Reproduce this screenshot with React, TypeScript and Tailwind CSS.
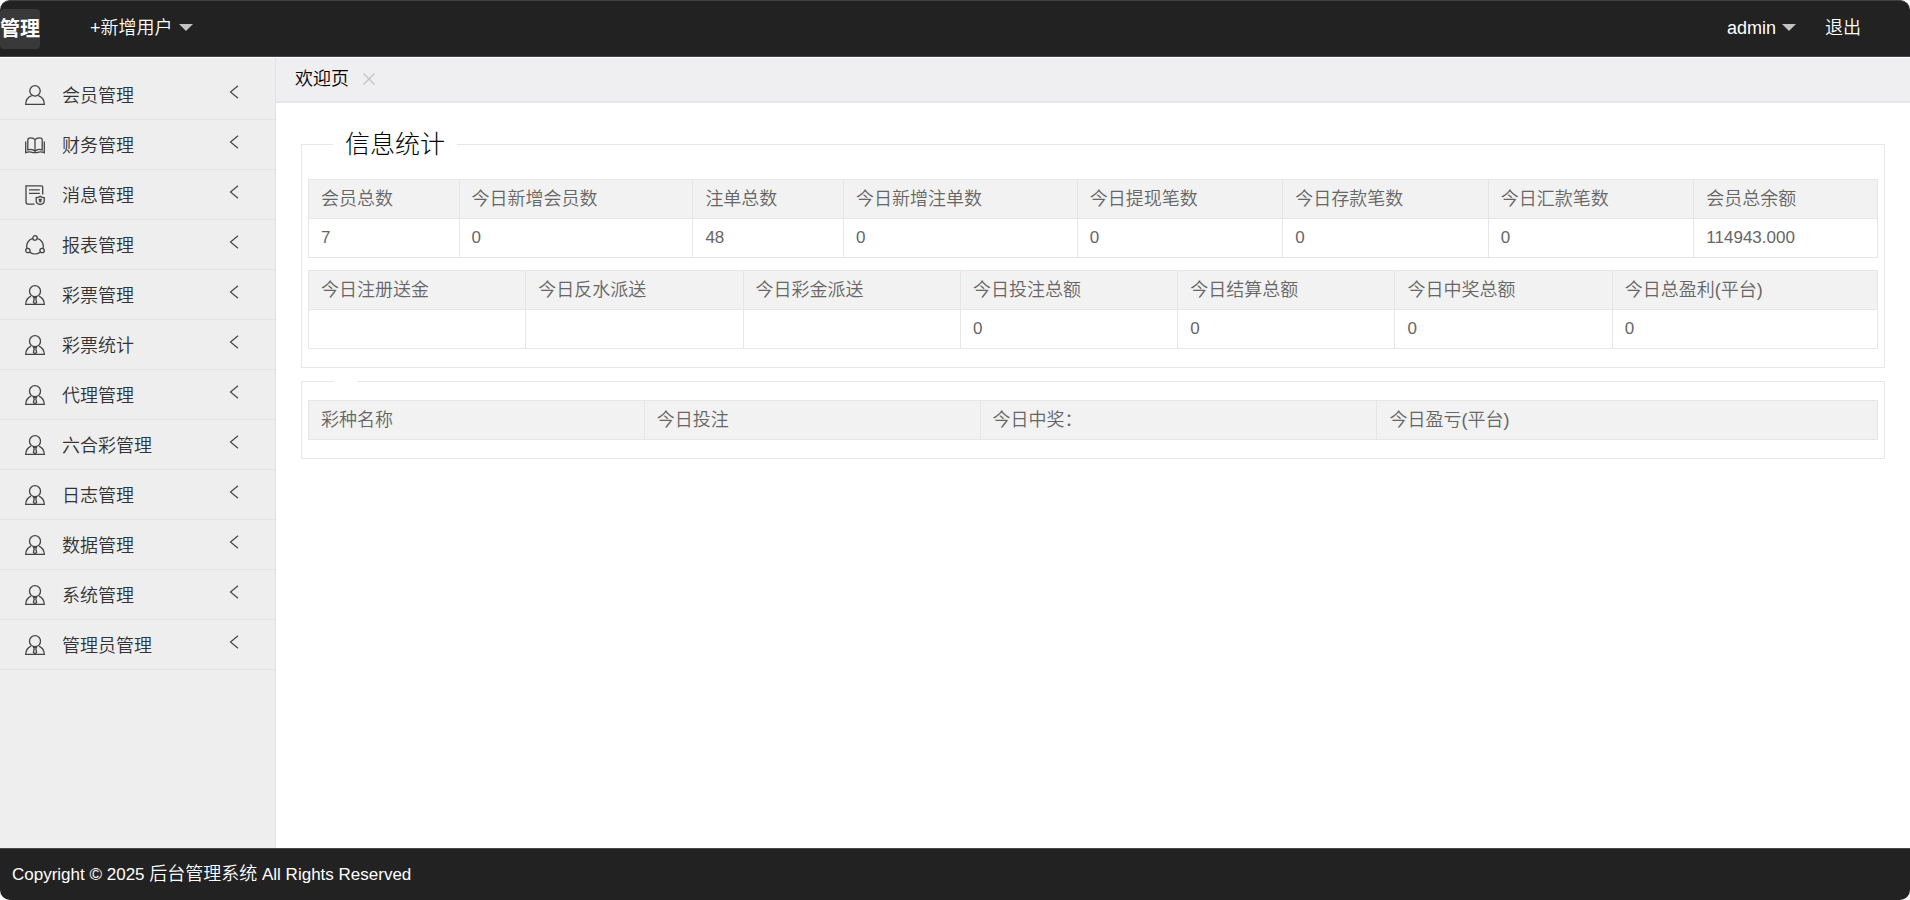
import { useState, type ReactNode } from "react";

interface Column {
  label: string;
  value?: string;
  width: string;
}

type IconName = "user" | "book" | "note" | "share" | "agent";

const MENU: { label: string; icon: IconName }[] = [
  { label: "会员管理", icon: "user" },
  { label: "财务管理", icon: "book" },
  { label: "消息管理", icon: "note" },
  { label: "报表管理", icon: "share" },
  { label: "彩票管理", icon: "agent" },
  { label: "彩票统计", icon: "agent" },
  { label: "代理管理", icon: "agent" },
  { label: "六合彩管理", icon: "agent" },
  { label: "日志管理", icon: "agent" },
  { label: "数据管理", icon: "agent" },
  { label: "系统管理", icon: "agent" },
  { label: "管理员管理", icon: "agent" },
];

const TOTALS: Column[] = [
  { label: "会员总数", value: "7", width: "w-[9.6%]" },
  { label: "今日新增会员数", value: "0", width: "w-[14.9%]" },
  { label: "注单总数", value: "48", width: "w-[9.6%]" },
  { label: "今日新增注单数", value: "0", width: "w-[14.9%]" },
  { label: "今日提现笔数", value: "0", width: "w-[13.1%]" },
  { label: "今日存款笔数", value: "0", width: "w-[13.1%]" },
  { label: "今日汇款笔数", value: "0", width: "w-[13.1%]" },
  { label: "会员总余额", value: "114943.000", width: "w-[11.7%]" },
];

const AMOUNTS: Column[] = [
  { label: "今日注册送金", value: "", width: "w-[13.85%]" },
  { label: "今日反水派送", value: "", width: "w-[13.85%]" },
  { label: "今日彩金派送", value: "", width: "w-[13.85%]" },
  { label: "今日投注总额", value: "0", width: "w-[13.85%]" },
  { label: "今日结算总额", value: "0", width: "w-[13.85%]" },
  { label: "今日中奖总额", value: "0", width: "w-[13.85%]" },
  { label: "今日总盈利(平台)", value: "0", width: "w-[16.9%]" },
];

const LOTTERIES: Column[] = [
  { label: "彩种名称", width: "w-[21.4%]" },
  { label: "今日投注", width: "w-[21.4%]" },
  { label: "今日中奖：", width: "w-[25.3%]" },
  { label: "今日盈亏(平台)", width: "w-[31.9%]" },
];

const ICONS: Record<IconName, ReactNode> = {
  user: (
    <>
      <circle cx="10" cy="5.9" r="5.2" />
      <path d="M6.6 10.6C3 12 .8 15.2.7 19.3h18.6c-.1-4.1-2.3-7.3-5.9-8.7" />
    </>
  ),
  book: (
    <>
      <path d="M10 4.6C9 3.3 7.4 2.8 5.500 2.800c-1.700 0-2.700.7-2.700 2.200v9.900c2.500-.9 5.400-.6 7.200 1.300 1.800-1.900 4.700-2.200 7.200-1.300V5c0-1.500-1-2.200-2.700-2.200C12.600 2.800 11 3.300 10 4.600zM10 4.600v11.600" />
      <path d="M.7 6.500v11.200c2.300-1.100 5-1.100 7.300-.1h4c2.300-1 5-1 7.300.1V6.500" />
    </>
  ),
  note: (
    <>
      <path d="M17.700 9.500V2.300c0-.8-.6-1.400-1.400-1.400H1v16.200c0 1.200.8 2 2 2h6.500" />
      <path d="M4 4.800h10.800M4 8.300h10.800" />
      <path d="M11.200 12.700c1.500 0 2.800-.5 4-1.300 1.200.8 2.500 1.300 4 1.300v3.600c0 1.900-1.700 2.800-4 3.100-2.300-.3-4-1.200-4-3.100z" />
      <path d="M13.600 14.300h3.200M15.200 14.300v3.200M13.800 16h2.800" />
    </>
  ),
  share: (
    <>
      <circle cx="10" cy="2.900" r="2.200" />
      <circle cx="2.900" cy="15.500" r="2.200" />
      <circle cx="17.100" cy="15.500" r="2.200" />
      <path d="M7.800 3.300A8.300 8.300 0 0 0 2 13.400M12.200 3.300A8.300 8.300 0 0 1 18 13.400M4.900 17.200a8.300 8.300 0 0 0 10.200 0" />
    </>
  ),
  agent: (
    <>
      <circle cx="10" cy="6.200" r="5.500" />
      <path d="M6 11.200C2.800 12.600.9 15.600.7 19.300h18.600c-.2-3.700-2.100-6.700-5.300-8.100" />
      <path d="M8.600 12.400h2.800l-.6 1.600.8 3.300-1.600 1.600-1.600-1.600.8-3.300z" />
    </>
  ),
};

function MenuIcon({ name }: { name: IconName }) {
  return (
    <svg
      viewBox="0 0 20 20"
      className="h-5 w-5 shrink-0"
      fill="none"
      stroke="#444"
      strokeWidth="1.300"
      aria-hidden="true"
    >
      {ICONS[name]}
    </svg>
  );
}

function Caret() {
  return <span className="border-x-7 border-t-7 border-x-transparent border-t-[#c2c2c2]" />;
}

function StatTable({ columns }: { columns: Column[] }) {
  const hasValues = columns.some((c) => c.value !== undefined);

  return (
    <table className="w-full table-fixed border-collapse text-left text-[#666]">
      <thead>
        <tr className="h-[39px] bg-[#f2f2f2]">
          {columns.map((c) => (
            <th
              key={c.label}
              className={`${c.width} border border-[#e6e6e6] px-3 text-lg leading-6 font-[350] whitespace-nowrap`}
            >
              {c.label}
            </th>
          ))}
        </tr>
      </thead>
      {hasValues && (
        <tbody>
          <tr className="h-[39px]">
            {columns.map((c) => (
              <td key={c.label} className="border border-[#e6e6e6] px-3 text-[17px] leading-6">
                {c.value}
              </td>
            ))}
          </tr>
        </tbody>
      )}
    </table>
  );
}

export default function App() {
  const [active, setActive] = useState<string | null>(null);

  return (
    <div className="flex h-screen flex-col bg-white font-['Liberation_Sans','Noto_Sans_CJK_SC',sans-serif] text-lg font-[350]">
      {/* Top bar */}
      <header className="flex h-[57px] shrink-0 items-center rounded-t-[10px] border-t border-b border-t-[#404040] border-b-[#4a4647] bg-[#222] text-white">
        <a
          href="#"
          className="flex h-10 w-10 items-center rounded bg-[#393939] text-xl font-bold whitespace-nowrap"
        >
          管理
        </a>
        <button className="ml-[50px] flex items-center gap-1.5 pb-0.5">
          +新增用户
          <Caret />
        </button>
        <div className="mr-[49px] ml-auto flex items-center gap-[29px] pb-0.5">
          <button className="flex items-center gap-1.5">
            admin
            <Caret />
          </button>
          <a href="#">退出</a>
        </div>
      </header>

      <div className="mt-px flex min-h-0 flex-1">
        {/* Side menu */}
        <nav className="w-[276px] shrink-0 overflow-y-auto border-r border-[#e2e2e2] bg-[#eee] pt-3">
          {MENU.map((m) => (
            <button
              key={m.label}
              onClick={() => setActive(m.label === active ? null : m.label)}
              className="flex h-[50px] w-full items-center border-b border-[#e3e3e3] pr-9 pl-[25px] text-left text-[#333]"
            >
              <MenuIcon name={m.icon} />
              <span className="ml-[17px] pt-0.5">{m.label}</span>
              <svg
                viewBox="0 0 10 14"
                className="mb-1.5 ml-auto h-3.5 w-2.5"
                fill="none"
                stroke="#444"
                strokeWidth="1.200"
                aria-hidden="true"
              >
                <path d="M9 .7 1.500 7 9 13.300" />
              </svg>
            </button>
          ))}
        </nav>

        <main className="flex min-w-0 flex-1 flex-col">
          {/* Tabs */}
          <div className="flex h-[45px] shrink-0 items-center border-b-2 border-[#e6e6e6] bg-[#efeef0] pb-0.5 pl-[19px] text-black">
            <span>欢迎页</span>
            <button aria-label="关闭" className="ml-3.5">
              <svg viewBox="0 0 12 12" className="h-3 w-3" stroke="#c4c4c4" strokeWidth="1.300">
                <path d="m.5.5 11 11M11.500.5l-11 11" />
              </svg>
            </button>
          </div>

          <div className="flex-1 overflow-auto px-[25px] pt-6">
            <fieldset className="border border-[#e6e6e6] px-1.5 pb-[18px]">
              <legend className="ml-[25px] px-3 text-[25px] leading-[34px] font-light text-black">
                信息统计
              </legend>
              <div className="flex flex-col gap-3 pt-[18px]">
                <StatTable columns={TOTALS} />
                <StatTable columns={AMOUNTS} />
              </div>
            </fieldset>

            <fieldset className="mt-[13px] border border-[#e6e6e6] px-1.5 py-[18px]">
              <legend className="ml-[25px] px-3" />
              <StatTable columns={LOTTERIES} />
            </fieldset>
          </div>
        </main>
      </div>

      <footer className="flex h-[52px] shrink-0 items-center rounded-b-[10px] border-t border-[#484848] bg-[#222] pl-3 text-white">
        <p className="text-[17px]">
          Copyright © 2025 <span className="text-lg">后台管理系统</span> All Rights Reserved
        </p>
      </footer>
    </div>
  );
}
